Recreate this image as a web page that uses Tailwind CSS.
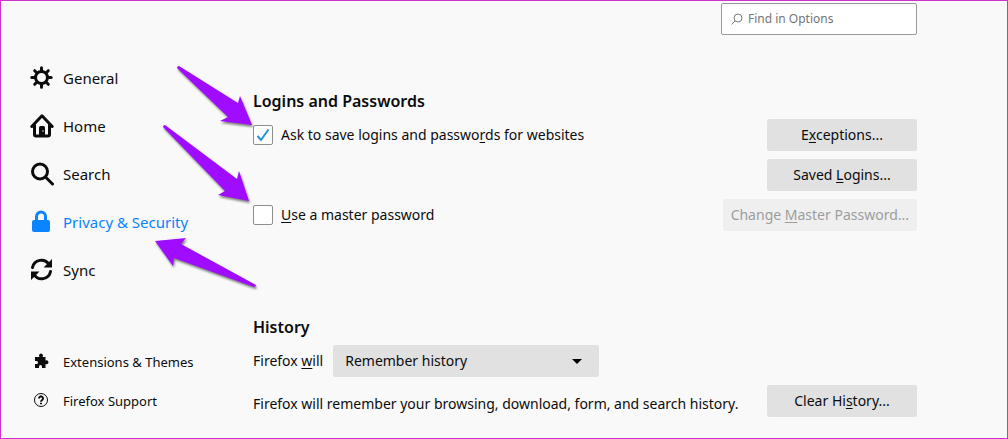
<!DOCTYPE html>
<html lang="en">
<head>
    <meta charset="UTF-8">
    <meta name="viewport" content="width=device-width, initial-scale=1.0">
    <title>Options</title>
    <script src="https://cdn.jsdelivr.net/npm/@tailwindcss/browser@4"></script>
</head>
<body class="relative min-h-screen flex bg-[#f9f9fa] border border-[#cb33cb] text-[#0c0c0d] text-[14px] leading-5 font-['Noto_Sans','Open_Sans',sans-serif]">
    <!-- Sidebar -->
    <nav class="w-[252px] shrink-0 pl-[29px] pt-[53px]">
        <div class="text-[15px]">
            <a href="#general" class="flex h-12 items-center gap-[9px]">
                <svg class="size-6" viewBox="0 0 24 24" fill="none" stroke="currentColor" stroke-linecap="round">
                    <circle cx="11.5" cy="11.5" r="6" stroke-width="3"/>
                    <path stroke-width="3" d="M11.5 1.8v3M11.5 18.2v3M1.8 11.5h3M18.2 11.5h3M4.7 4.7l2 2M16.3 16.3l2 2M4.7 18.3l2-2M16.3 6.7l2-2"/>
                </svg>
                General
            </a>
            <a href="#home" class="flex h-12 items-center gap-[9px]">
                <svg class="size-6" viewBox="0 0 24 24" fill="none" stroke="currentColor" stroke-width="3" stroke-linecap="round" stroke-linejoin="round">
                    <path d="M1.8 12.5L12 1.8l10.2 10.7M4.5 11v9.5a1.500 1.500 0 0 0 1.500 1.500h12a1.500 1.500 0 0 0 1.500-1.500V11"/>
                    <path fill="currentColor" stroke="none" d="M9 22v-8.500a1.500 1.500 0 0 1 1.500-1.500h3a1.500 1.500 0 0 1 1.500 1.500V22z"/>
                    <circle cx="13" cy="17" r="1" fill="#8a8a8a" stroke="none"/>
                </svg>
                Home
            </a>
            <a href="#search" class="flex h-12 items-center gap-[9px]">
                <svg class="size-6" viewBox="0 0 24 24" fill="none" stroke="currentColor" stroke-width="3" stroke-linecap="round">
                    <circle cx="10" cy="9.5" r="7.5"/>
                    <path d="M15.5 15l7 7"/>
                </svg>
                Search
            </a>
            <a href="#privacy" class="flex h-12 items-center gap-[9px] text-[#0a84ff]">
                <svg class="size-6" viewBox="0 0 24 24" fill="none">
                    <rect x="2" y="10" width="18" height="12" rx="2" fill="currentColor"/>
                    <path d="M6.5 11V6.500a4.500 4.500 0 0 1 9 0V11" stroke="currentColor" stroke-width="3"/>
                </svg>
                Privacy &amp; Security
            </a>
            <a href="#sync" class="flex h-12 items-center gap-[9px]">
                <svg class="size-6" viewBox="0 0 24 24" fill="none" stroke="currentColor" stroke-width="3" stroke-linecap="round">
                    <path d="M2.500 9.500A9 9 0 0 1 19 6.500M20.500 13.500A9 9 0 0 1 4 16.500"/>
                    <path fill="currentColor" stroke="none" d="M22 1v8.500h-8.500zM1 22v-8.500h8.500z"/>
                </svg>
                Sync
            </a>
        </div>
        <div class="mt-12 text-[13px]">
            <a href="#extensions" class="flex h-[39px] items-center gap-[9px]">
                <svg class="size-6" viewBox="0 0 24 24" fill="currentColor">
                    <path d="M5 7h4.500a2 2 0 1 1 3 0H15.500v3.500a2 2 0 1 1 0 3.500V18h-3.500v-1.500a1.500 1.500 0 0 0-3 0V18H5v-4h1.500a1.500 1.500 0 0 0 0-3H5z"/>
                </svg>
                Extensions &amp; Themes
            </a>
            <a href="#support" class="flex h-[39px] items-center gap-[9px]">
                <svg class="size-6" viewBox="0 0 24 24" fill="none" stroke="currentColor">
                    <circle cx="11" cy="11" r="6.500"/>
                    <path stroke-width="2" d="M9 9.500a2 2 0 1 1 3.200 1.500c-.8.500-1.200.8-1.200 1.700M11 13.700v1.500"/>
                </svg>
                Firefox Support
            </a>
        </div>
    </nav>

    <!-- Settings pane -->
    <main class="flex-1 max-w-[664px] pt-[2px]">
        <label class="ml-auto flex h-8 w-[196px] items-center gap-[5px] rounded-xs border border-[#999] bg-white pl-[9px]">
            <svg class="size-3 shrink-0" viewBox="0 0 12 12" fill="none" stroke="#808080">
                <circle cx="7" cy="5" r="4"/>
                <path d="M4 8l-3.500 3.500"/>
            </svg>
            <input type="search" placeholder="Find in Options" aria-label="Find in Options" class="min-w-0 flex-1 text-[12px] outline-none placeholder:text-[#757575]">
        </label>

        <section class="mt-[54px]">
            <h2 class="mb-1.5 text-[16px] leading-6 font-semibold">Logins and Passwords</h2>
            <div class="grid grid-cols-[1fr_auto] items-center justify-items-start gap-y-2">
                <label class="flex items-center gap-2">
                    <span class="grid size-5">
                        <input type="checkbox" checked class="peer col-start-1 row-start-1 size-5 appearance-none rounded-xs border border-[#8f8f8f] bg-white">
                        <svg class="col-start-1 row-start-1 hidden size-5 pointer-events-none peer-checked:block" viewBox="0 0 20 20" fill="none" stroke="#2292d0" stroke-width="2">
                            <path d="M4.500 11l3.500 4L15.500 4.500"/>
                        </svg>
                    </span>
                    <span>Ask to save logins and passwo<u class="underline-offset-2">r</u>ds for websites</span>
                </label>
                <button class="h-8 min-w-[150px] justify-self-end rounded-xs bg-[#e1e1e2] px-2">E<u class="underline-offset-2">x</u>ceptions...</button>
                <button class="col-start-2 h-8 min-w-[150px] justify-self-end rounded-xs bg-[#e1e1e2] px-2">Saved <u class="underline-offset-2">L</u>ogins...</button>
                <label class="flex items-center gap-2">
                    <input type="checkbox" class="size-5 appearance-none rounded-xs border border-[#8f8f8f] bg-white">
                    <span><u class="underline-offset-2">U</u>se a master password</span>
                </label>
                <button disabled class="h-8 min-w-[150px] justify-self-end rounded-xs bg-[#efeff0] px-2 text-[#9d9d9e]">Change <u class="underline-offset-2">M</u>aster Password...</button>
            </div>
        </section>

        <section class="mt-[84px]">
            <h2 class="mb-1.5 text-[16px] leading-6 font-semibold">History</h2>
            <div class="flex items-center gap-[10px]">
                <label for="history">Firefox <u class="underline-offset-2">w</u>ill</label>
                <div class="grid w-[266px] items-center">
                    <select id="history" class="col-start-1 row-start-1 h-8 appearance-none rounded-xs bg-[#e1e1e2] px-3">
                        <option>Remember history</option>
                        <option>Never remember history</option>
                        <option>Use custom settings for history</option>
                    </select>
                    <svg class="col-start-1 row-start-1 mr-[17px] h-[5px] w-[10px] justify-self-end pointer-events-none" viewBox="0 0 10 5">
                        <path d="M0 0h10L5 5z"/>
                    </svg>
                </div>
            </div>
            <div class="mt-2 flex items-center justify-between">
                <p class="pt-1.5 whitespace-nowrap">Firefox will remember your browsing, download, form, and search history.</p>
                <button class="h-8 min-w-[150px] rounded-xs bg-[#e1e1e2] px-2">Clear Hi<u class="underline-offset-2">s</u>tory...</button>
            </div>
        </section>
    </main>

    <!-- Pointer arrows over the page -->
    <svg class="absolute -left-px -top-px h-[300px] w-[300px] pointer-events-none drop-shadow-[1px_2px_1px_rgba(0,0,0,0.5)]" viewBox="0 0 300 300" fill="#a00cff">
        <path d="M177 68q0-2 2-2L238 103l2-7 12 29-32-4 8-4z"/>
        <path d="M163 127q0-2 2-2L237 179l2-8 10 30-31-6 7-4z"/>
        <path d="M256 285q0 2-2 2L174 258l-1 8-18-25 31-3-5 6z"/>
    </svg>
</body>
</html>
